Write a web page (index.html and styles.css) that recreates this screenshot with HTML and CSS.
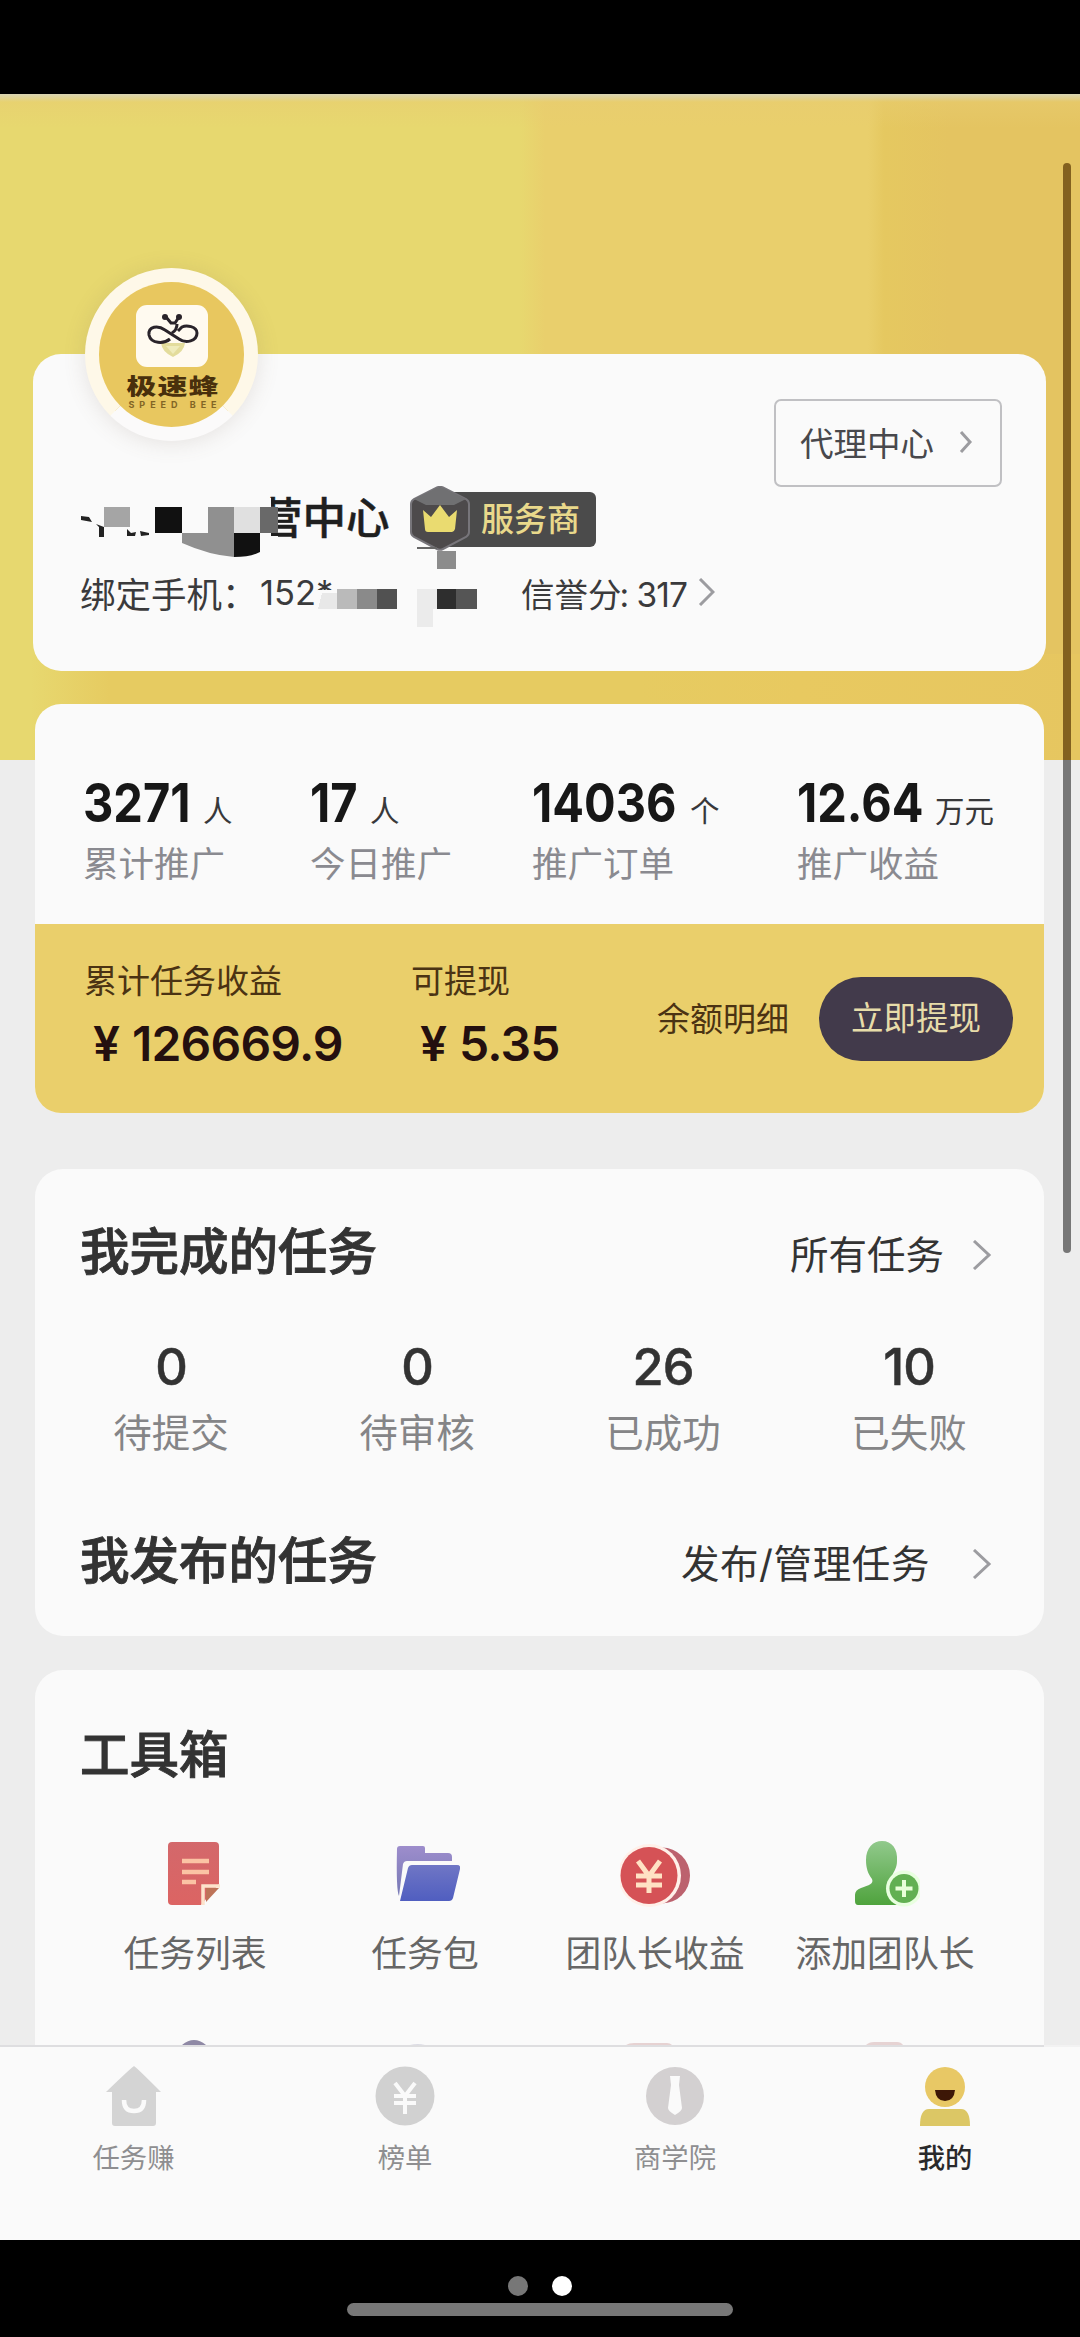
FILE: index.html
```html
<!DOCTYPE html>
<html lang="zh-CN">
<head>
<meta charset="utf-8">
<title>我的</title>
<link rel="stylesheet" href="styles.css">
</head>
<body>
<div class="phone">
  <main class="app">
    <section class="card profile">
      <div class="avatar">
        <svg class="bee" viewBox="0 0 72 62" width="72" height="62">
          <rect width="72" height="62" rx="11" fill="#fffaf0"/>
          <path d="M25 38h24q-1 9-12 14q-11-5-12-14z" fill="#e3dc9c"/>
          <path d="M30 41h14l-7 8z" fill="#efebbb"/>
          <path d="M34 34C28 39 15 39 13 30C12 21 22 20 29 25L43 34C50 39 61 36 61 28C61 21 50 20 46 22L42 26M36 28Q41 25 41 19M30 12L35 18H39L43 12" fill="none" stroke="#29232a" stroke-width="3"/>
          <circle cx="29" cy="12" r="3" fill="#29232a"/><circle cx="43" cy="12" r="3" fill="#29232a"/>
        </svg>
        <span class="brand">极速蜂</span>
        <span class="brand-en">SPEED BEE</span>
      </div>
      <a class="agent">代理中心<svg width="14" height="22" viewBox="0 0 14 22"><path d="M2 1l9 10-9 10"/></svg></a>
      <div class="name-row">
        <span class="name">营中心</span>
        <div class="badge">
          <svg class="hex" width="60" height="65" viewBox="0 0 60 65">
            <path d="M27 1.500q3-1.500 6 0L56 13q3 2 3 5v28q0 3-3 5L33 63q-3 1.500-6 0L4 51q-3-2-3-5V18q0-3 3-5z" fill="#4d4a4b" stroke="#77757a" stroke-width="2"/>
            <path d="M27 2q3-1 6 0L56 13 44 19H16L4 13z" fill="#707072"/>
            <path d="M13 24l8 7 9-12 9 12 8-7-2 19q-1 3-3 3H18q-3 0-3-3z" fill="#eadb70"/>
          </svg>
          <span>服务商</span>
        </div>
      </div>
      <div class="meta-row">
        <span class="phone-label">绑定手机：</span><span class="phone-no">152*</span>
        <span class="credit">信誉分<i>: 317</i></span>
        <svg width="17" height="28" viewBox="0 0 17 28"><path d="M2 1l13 13L2 27"/></svg>
      </div>
      <svg class="mosaic" width="420" height="150" viewBox="70 485 420 150">
        <path d="M80 498h191v38h7v26H80zM318 590h92v40h-92z" fill="#fafafa"/>
        <path d="M81 516l8 1 3 5-11-2zM96 524l8 3v10h-5v-10zM127 529l4 4 5-1-1 4h-8zM140 531l9 2v2l-8 1z" fill="#222"/>
        <g shape-rendering="crispEdges">
          <path d="M104 507h26v20h-26z" fill="#a5a5a5"/>
          <path d="M155 507h27v26h-27z" fill="#111"/>
          <path d="M208 507h26v26h-26z" fill="#909090"/>
          <path d="M234 507h26v26h-26z" fill="#e0e0e0"/>
          <path d="M260 507h18v26h-18z" fill="#696969"/>
          <path d="M322 593h15v16h-19z" fill="#e8e8e8"/>
          <path d="M337 589h20v20h-20z" fill="#bababa"/>
          <path d="M357 589h20v20h-20z" fill="#8a8a8a"/>
          <path d="M377 589h20v20h-20z" fill="#515151"/>
          <path d="M417 589h20v20h-20zM417 609h16v18h-16z" fill="#ebebeb"/>
          <path d="M437 589h19v20h-19z" fill="#2e2e2e"/>
          <path d="M456 589h21v20h-21z" fill="#555"/>
          <path d="M437 551h19v18h-19z" fill="#8c8c8c"/>
        </g>
        <path d="M182 533h52v24q-25-2-52-14z" fill="#909090"/>
        <path d="M234 533h26v19q-9 5-26 5z" fill="#111"/>
        <path d="M417 547h20v2h-20z" fill="#666"/>
      </svg>
    </section>

    <section class="card earnings">
      <div class="stats">
        <div class="stat"><p><b>3271</b>人</p><span>累计推广</span></div>
        <div class="stat"><p><b>17</b>人</p><span>今日推广</span></div>
        <div class="stat"><p><b>14036</b>个</p><span>推广订单</span></div>
        <div class="stat"><p><b>12.64</b>万元</p><span>推广收益</span></div>
      </div>
      <div class="wallet">
        <div class="sum total"><span>累计任务收益</span><strong><em>¥</em>126669.9</strong></div>
        <div class="sum"><span>可提现</span><strong><em>¥</em>5.35</strong></div>
        <a class="detail">余额明细</a>
        <a class="withdraw">立即提现</a>
      </div>
    </section>

    <section class="card tasks">
      <header class="row"><h2>我完成的任务</h2><a>所有任务<svg width="20" height="30" viewBox="0 0 20 30"><path d="M2 1l15 14L2 29"/></svg></a></header>
      <div class="counts">
        <div><b>0</b><span>待提交</span></div>
        <div><b>0</b><span>待审核</span></div>
        <div><b>26</b><span>已成功</span></div>
        <div><b>10</b><span>已失败</span></div>
      </div>
      <header class="row"><h2>我发布的任务</h2><a class="wide">发布/管理任务<svg width="20" height="30" viewBox="0 0 20 30"><path d="M2 1l15 14L2 29"/></svg></a></header>
    </section>

    <section class="card tools">
      <h2>工具箱</h2>
      <div class="tool-grid">
        <div class="tool">
          <svg width="70" height="68" viewBox="0 0 70 68">
            <defs><linearGradient id="r" x2="0" y2="1"><stop stop-color="#d3686b"/><stop offset="1" stop-color="#dc6463"/></linearGradient></defs>
            <path d="M12 2h43q4 0 4 4v38L41 65H12q-4 0-4-4V6q0-4 4-4z" fill="url(#r)"/>
            <path d="M22 21h27M22 32h27M22 42h14" stroke="#fbc3a4" stroke-width="4.500"/>
            <path d="M43 65V46h17" fill="none" stroke="#fde3cc" stroke-width="3.500"/><path d="M46 62V48h13z" fill="#bd7358"/>
          </svg><span>任务列表</span></div>
        <div class="tool">
          <svg width="70" height="68" viewBox="0 0 70 68">
            <defs><linearGradient id="f1" x2="0" y2="1"><stop stop-color="#9d8dcc"/><stop offset="1" stop-color="#7679b5"/></linearGradient><linearGradient id="f2" x2="0" y2="1"><stop stop-color="#6f76c5"/><stop offset="1" stop-color="#505ec0"/></linearGradient></defs>
            <path d="M10 6h23q2 0 2 2v5h23q4 0 4 4v4H17Q14 21 13 24L9 56Q6 50 7 9q0-3 3-3z" fill="url(#f1)"/>
            <path d="M22 25h45q4 0 3 4l-7 29q-1 3-4 3H10l8-33q1-3 4-3z" fill="url(#f2)"/>
          </svg><span>任务包</span></div>
        <div class="tool">
          <svg width="70" height="68" viewBox="0 0 70 68">
            <circle cx="42" cy="35.500" r="28" fill="#bc626e"/><circle cx="29.500" cy="35.500" r="31.500" fill="#fff0e9"/><circle cx="29" cy="35.500" r="28.500" fill="#d55256"/>
            <path d="M18 21l11 15 11-15M29 36v17M16 36h26M16 45h26" fill="none" stroke="#ffe2c4" stroke-width="5"/>
          </svg><span>团队长收益</span></div>
        <div class="tool">
          <svg width="70" height="68" viewBox="-1 0 70 68">
            <defs><linearGradient id="g" x2="0" y2="1"><stop stop-color="#91c98c"/><stop offset="1" stop-color="#4fa33d"/></linearGradient></defs>
            <path d="M31 1c10 0 16 8 15 20 0 7-3 10-5 15q1 6 10 11v18H7q-3 0-3-4V55q0-5 6-7c8-3 13-4 11-9-4-5-6-11-6-19C15 8 22 1 31 1z" fill="url(#g)"/>
            <circle cx="53" cy="48.500" r="18" fill="#e9ffe0"/><circle cx="53" cy="48.500" r="14.500" fill="#62b052"/><path d="M53 40v17M44.500 48.500h17" stroke="#e9ffd9" stroke-width="4"/>
          </svg><span>添加团队长</span></div>
      </div>
      <svg class="peek" width="800" height="6" viewBox="0 0 800 6"><path d="M0 6q12-10 24 0z" fill="#8f89a5"/><path d="M228 6q8-2 15 0z" fill="#dcdce4"/><path d="M444 6q3-2 8-2h33q3 0 5 2z" fill="#e6d2d2"/><path d="M684 6q3-3 8-3h23q4 0 6 3z" fill="#e6d3d3"/></svg>
    </section>
    <i class="scrollbar"></i>
  </main>

  <nav class="tabs">
    <a><svg width="60" height="60" viewBox="0 0 60 60"><path d="M30 0q2 1 27 26h-5v31q0 3-3 3H11q-3 0-3-3V26H2Q28 1 30 0z" fill="#d4d4d4"/><path d="M20 34q0 11 10 11t10-11" fill="none" stroke="#fafafa" stroke-width="4.500"/></svg>任务赚</a>
    <a><svg width="60" height="60" viewBox="0 0 60 60"><circle cx="30" cy="30" r="29.500" fill="#d1d1d1"/><path d="M20 17l10 13 10-13M30 30v18M19 30h22M19 37h22" fill="none" stroke="#fafafa" stroke-width="4"/></svg>榜单</a>
    <a><svg width="60" height="60" viewBox="0 0 60 60"><circle cx="30" cy="30" r="29" fill="#d3d0d1"/><path d="M25 10h10l-1 9 3 23q0 3-7 7-7-4-7-7l3-23z" fill="#fafafa"/></svg>商学院</a>
    <a class="active"><svg width="60" height="60" viewBox="0 0 60 60"><circle cx="30" cy="21" r="20" fill="#e8c865"/><path d="M20 24h20q-1 11-10 11T20 24z" fill="#3d1706"/><path d="M5 60Q5 43 14 43H46q9 0 9 17z" fill="#dcc765"/></svg>我的</a>
  </nav>

  <footer class="system"><div class="dots"><i></i><i class="on"></i></div><div class="home"></div></footer>
</div>
</body>
</html>
```

FILE: styles.css
```css
* { box-sizing: border-box; }
body { margin: 0; background: #000; }
h2, p { margin: 0; }
i, em { font-style: normal; }

.phone {
  width: 1080px;
  height: 2337px;
  padding-top: 94px;
  display: flex;
  flex-direction: column;
  overflow: hidden;
  font-family: Inter, "Noto Sans CJK SC", sans-serif;
  color: #333;
}

.app {
  position: relative;
  height: 1951px;
  flex: none;
  padding: 260px 36px 0 35px;
  overflow: hidden;
  background:
    linear-gradient(#d9d5b4 0, rgba(232, 204, 112, .5) 8px, rgba(234, 206, 106, 0) 34px) 0 0 / 100% 34px no-repeat,
    linear-gradient(to right, #e7d86f 0 30px, #e6cb61 110px 640px, #e8c960 800px, #e6c660 100%) 0 560px / 100% 106px no-repeat,
    linear-gradient(to right, #e7d86f 0 520px, #e9cf6c 545px 868px, #e5c860 884px, #e4c461 950px 100%) 0 0 / 100% 666px no-repeat,
    #ededed;
}

.card { position: relative; background: #fafafa; border-radius: 28px; }

/* profile */
.profile { width: 1013px; height: 317px; margin-left: -2px; padding: 121px 0 0 48px; }
.avatar {
  position: absolute;
  left: 52px;
  top: -86px;
  width: 173px;
  height: 173px;
  border: 14px solid #fef8e8;
  border-bottom-color: #fbfafa;
  border-radius: 50%;
  background: #e8c75f;
  box-shadow: 0 2px 22px rgba(120, 100, 90, .16);
  display: flex;
  flex-direction: column;
  align-items: center;
  padding-top: 23px;
}
.brand { margin-top: 6px; font-size: 30px; font-weight: 900; line-height: 27px; letter-spacing: 1px; margin-right: -3px; color: #49300c; transform: scaleY(.72); }
.brand-en { font-size: 9px; font-weight: 700; line-height: 9px; letter-spacing: 5px; margin-right: -7px; color: #826525; white-space: nowrap; }
.agent {
  position: absolute;
  right: 44px;
  top: 45px;
  width: 228px;
  height: 88px;
  padding: 0 0 3px 24px;
  border: 2px solid #c0c0c3;
  border-radius: 7px;
  display: flex;
  align-items: center;
  gap: 25px;
  font-size: 33.5px;
  color: #48484c;
}
.agent svg, .meta-row svg, .row svg { fill: none; stroke: #9c9ca0; stroke-width: 3; }
.name-row { display: flex; height: 84px; align-items: center; }
.name { width: 329px; padding-left: 178px; margin-top: -3px; font-size: 43.500px; font-weight: 500; color: #1f1f1f; white-space: nowrap; -webkit-text-stroke: .5px #1f1f1f; }
.badge { position: relative; width: 186px; height: 55px; margin-top: 4px; border-radius: 6px; background: linear-gradient(to right, transparent 0 30px, #4b4b4b 30px); color: #e9d98b; font-size: 33px; line-height: 55px; font-weight: 500; padding-left: 71px; }
.hex { position: absolute; left: 0; top: -6px; }
.meta-row { display: flex; align-items: center; height: 48px; margin-top: 9px; margin-left: -1px; color: #3a3a3c; white-space: nowrap; }
.phone-label { width: 180px; font-size: 35.500px; }
.phone-no { width: 261px; font-size: 34.500px; letter-spacing: 0; }
.credit { width: 177px; font-size: 33.500px; }
.credit i { margin-left: -2px; letter-spacing: -1px; }
.mosaic { position: absolute; left: 37px; top: 131px; }

/* earnings */
.earnings { height: 409px; margin-top: 33px; overflow: hidden; border-radius: 26px; }
.stats { height: 220px; padding: 69px 0 0 48px; display: grid; grid-template-columns: 227px 222px 265px 1fr; }
.stat p { display: flex; align-items: baseline; height: 70px; line-height: 60px; font-size: 29.500px; color: #38383a; white-space: nowrap; }
.stat b { flex: none; width: 120px; font-size: 54px; font-weight: 700; color: #171717; transform: scaleX(.87); transform-origin: left; }
.stat:nth-child(2) b { width: 60px; }
.stat:nth-child(3) b { width: 158px; }
.stat:nth-child(4) b { width: 138px; }
.stat span { display: block; font-size: 35.500px; line-height: 44px; color: #8a8a90; }
.wallet { height: 189px; padding: 0 31px 0 49px; display: flex; background: #eacf6b; color: #4b3313; }
.sum { width: 246px; padding-top: 36px; }
.sum.total { width: 327px; }
.sum span { display: block; font-size: 33px; line-height: 42px; }
.sum strong { display: block; padding-left: 9px; margin-top: 12px; font-size: 48px; line-height: 60px; font-weight: 600; letter-spacing: -.8px; color: #24100f; white-space: nowrap; }
.sum em { display: inline-block; width: 39px; }
.detail { width: 162px; font-size: 33px; line-height: 190px; }
.withdraw { width: 194px; height: 84px; margin-top: 53px; border-radius: 42px; background: #423a4b; color: #e7dca9; font-size: 32.500px; line-height: 84px; text-align: center; }

/* tasks */
h2 { font-size: 49.500px; font-weight: 500; line-height: 70px; white-space: nowrap; -webkit-text-stroke: .9px #333; }
.tasks { height: 467px; margin-top: 56px; padding: 48px 52px 0 45px; }
.row { display: flex; justify-content: space-between; align-items: center; }
.row a { display: flex; align-items: center; gap: 28px; margin-top: 6px; font-size: 38.500px; line-height: 56px; color: #333; }
.row a.wide { gap: 42px; letter-spacing: .6px; }
.counts { display: grid; grid-template-columns: repeat(4, 246px); margin: 45px 0 54px -32px; height: 140px; text-align: center; }
.counts b { display: block; font-size: 50.500px; line-height: 70px; font-weight: 500; letter-spacing: -1px; -webkit-text-stroke: .5px #333; }
.counts span { display: block; margin-top: 6px; font-size: 38.500px; line-height: 50px; color: #858587; }

/* tools */
.tools { height: 420px; margin-top: 34px; padding-top: 50px; }
.tools h2 { padding-left: 45px; }
.tool-grid { display: grid; grid-template-columns: repeat(4, 230px); margin: 50px 0 0 45px; }
.tool { display: flex; flex-direction: column; align-items: center; font-size: 35.800px; line-height: 44px; color: #666; white-space: nowrap; }
.tool span { margin-top: 24px; }
.peek { position: absolute; left: 147px; top: 369px; }

.scrollbar { position: absolute; left: 1063px; top: 69px; width: 8px; height: 1090px; border-radius: 4px; background: linear-gradient(#83611f 0 597px, #777 597px); }

.tabs { height: 195px; flex: none; display: grid; grid-template-columns: repeat(4, 270px); background: linear-gradient(to right, #dedee0 1044px, #f2f2f2 0) 0 0 / 100% 2px no-repeat, #fafafa; }
.tabs a { display: flex; flex-direction: column; align-items: center; gap: 13px; padding-top: 21px; font-size: 27.300px; line-height: 40px; color: #8e8e90; }
.tabs a:first-child { padding-right: 3px; }
.tabs a.active { color: #29292b; font-weight: 500; }

.system { height: 97px; padding-top: 36px; display: flex; flex-direction: column; align-items: center; }
.dots { display: flex; gap: 24px; }
.dots i { width: 20px; height: 20px; border-radius: 50%; background: #777; }
.dots .on { background: #fff; }
.home { width: 386px; height: 13px; margin-top: 7px; border-radius: 7px; background: #777; }
```
